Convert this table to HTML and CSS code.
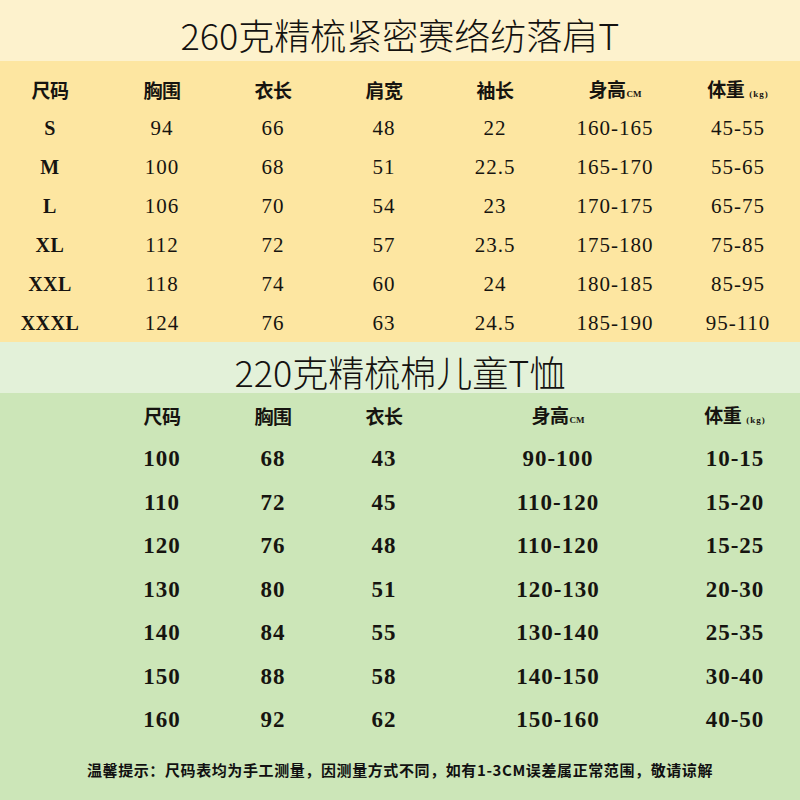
FILE: index.html
```html
<!DOCTYPE html>
<html lang="zh-CN">
<head>
<meta charset="utf-8">
<title>尺码表</title>
<link rel="stylesheet" href="styles.css">
</head>
<body>
<div class="sheet">
  <div class="title-band adult-title"><h1 class="title">260克精梳紧密赛络纺落肩T</h1></div>
  <div class="table adult">
    <div class="row head">
      <div class="cell">尺码</div>
      <div class="cell">胸围</div>
      <div class="cell">衣长</div>
      <div class="cell">肩宽</div>
      <div class="cell">袖长</div>
      <div class="cell">身高<span class="unit">CM</span></div>
      <div class="cell">体重<span class="unit paren">(kg)</span></div>
    </div>
    <div class="row"><div class="cell size">S</div><div class="cell">94</div><div class="cell">66</div><div class="cell">48</div><div class="cell">22</div><div class="cell">160-165</div><div class="cell">45-55</div></div>
    <div class="row"><div class="cell size">M</div><div class="cell">100</div><div class="cell">68</div><div class="cell">51</div><div class="cell">22.5</div><div class="cell">165-170</div><div class="cell">55-65</div></div>
    <div class="row"><div class="cell size">L</div><div class="cell">106</div><div class="cell">70</div><div class="cell">54</div><div class="cell">23</div><div class="cell">170-175</div><div class="cell">65-75</div></div>
    <div class="row"><div class="cell size">XL</div><div class="cell">112</div><div class="cell">72</div><div class="cell">57</div><div class="cell">23.5</div><div class="cell">175-180</div><div class="cell">75-85</div></div>
    <div class="row"><div class="cell size">XXL</div><div class="cell">118</div><div class="cell">74</div><div class="cell">60</div><div class="cell">24</div><div class="cell">180-185</div><div class="cell">85-95</div></div>
    <div class="row"><div class="cell size">XXXL</div><div class="cell">124</div><div class="cell">76</div><div class="cell">63</div><div class="cell">24.5</div><div class="cell">185-190</div><div class="cell">95-110</div></div>
  </div>
  <div class="title-band kids-title"><h1 class="title">220克精梳棉儿童T恤</h1></div>
  <div class="table kids">
    <div class="row head">
      <div class="cell"></div>
      <div class="cell">尺码</div>
      <div class="cell">胸围</div>
      <div class="cell">衣长</div>
      <div class="cell">身高<span class="unit">CM</span></div>
      <div class="cell">体重<span class="unit paren">(kg)</span></div>
    </div>
    <div class="row"><div class="cell"></div><div class="cell">100</div><div class="cell">68</div><div class="cell">43</div><div class="cell">90-100</div><div class="cell">10-15</div></div>
    <div class="row"><div class="cell"></div><div class="cell">110</div><div class="cell">72</div><div class="cell">45</div><div class="cell">110-120</div><div class="cell">15-20</div></div>
    <div class="row"><div class="cell"></div><div class="cell">120</div><div class="cell">76</div><div class="cell">48</div><div class="cell">110-120</div><div class="cell">15-25</div></div>
    <div class="row"><div class="cell"></div><div class="cell">130</div><div class="cell">80</div><div class="cell">51</div><div class="cell">120-130</div><div class="cell">20-30</div></div>
    <div class="row"><div class="cell"></div><div class="cell">140</div><div class="cell">84</div><div class="cell">55</div><div class="cell">130-140</div><div class="cell">25-35</div></div>
    <div class="row"><div class="cell"></div><div class="cell">150</div><div class="cell">88</div><div class="cell">58</div><div class="cell">140-150</div><div class="cell">30-40</div></div>
    <div class="row"><div class="cell"></div><div class="cell">160</div><div class="cell">92</div><div class="cell">62</div><div class="cell">150-160</div><div class="cell">40-50</div></div>
    <p class="note">温馨提示：尺码表均为手工测量，因测量方式不同，如有1-3CM误差属正常范围，敬请谅解</p>
  </div>
</div>
</body>
</html>
```

FILE: styles.css
```css
* { box-sizing: border-box; }

html, body {
  margin: 0;
  padding: 0;
  background: #cce6b8;
}

.sheet {
  width: 800px;
  height: 800px;
  display: flex;
  flex-direction: column;
  overflow: hidden;
  color: #161410;
}

.title-band {
  display: flex;
  align-items: center;
  justify-content: center;
}

.title {
  margin: 0;
  font-family: "Noto Sans CJK SC", "Noto Sans", sans-serif;
  font-weight: 300;
  font-size: 36px;
  line-height: 1;
  color: #141210;
}

.adult-title {
  height: 61px;
  padding-top: 6px;
  background: #fdf2cd;
}

.kids-title {
  height: 51px;
  padding-top: 6px;
  background: #e3f1d9;
}

.table {
  display: flex;
  flex-direction: column;
}

.adult {
  height: 281px;
  padding-top: 8.5px;
  background: #fde6a1;
}

.kids {
  flex: 1;
  background: #cce6b8;
}

.row {
  display: grid;
  align-items: center;
  flex: none;
}

.adult .row {
  height: 39px;
  grid-template-columns: 100px 124px 98px 124px 98px 142px 104px;
}

.kids .row {
  height: 43.5px;
  grid-template-columns: 100px 124px 98px 124px 224px 130px;
}

.kids .row.head {
  height: 44px;
}

.cell {
  text-align: center;
  white-space: nowrap;
  font-family: "Liberation Serif", "DejaVu Serif", serif;
  font-size: 21px;
  letter-spacing: 1px;
  line-height: 1;
}

.kids .cell {
  font-weight: 700;
  font-size: 23px;
  letter-spacing: 1px;
}

.head .cell {
  font-family: "Noto Sans CJK SC", "Noto Sans", sans-serif;
  font-weight: 700;
  font-size: 19px;
  letter-spacing: -0.5px;
}

.cell.size {
  font-weight: 700;
  font-size: 20px;
  letter-spacing: 0.5px;
}

.unit {
  font-family: "Liberation Serif", serif;
  font-size: 9px;
  font-weight: 700;
  letter-spacing: 0;
  margin-left: 1px;
}

.unit.paren {
  margin-left: 5px;
  letter-spacing: 1px;
}

.note {
  flex: 1;
  margin: 0;
  display: flex;
  align-items: center;
  justify-content: center;
  padding-bottom: 2px;
  font-family: "Noto Sans CJK SC", "Noto Sans", sans-serif;
  font-weight: 700;
  font-size: 15px;
  letter-spacing: 0.6px;
  color: #111;
}
```
